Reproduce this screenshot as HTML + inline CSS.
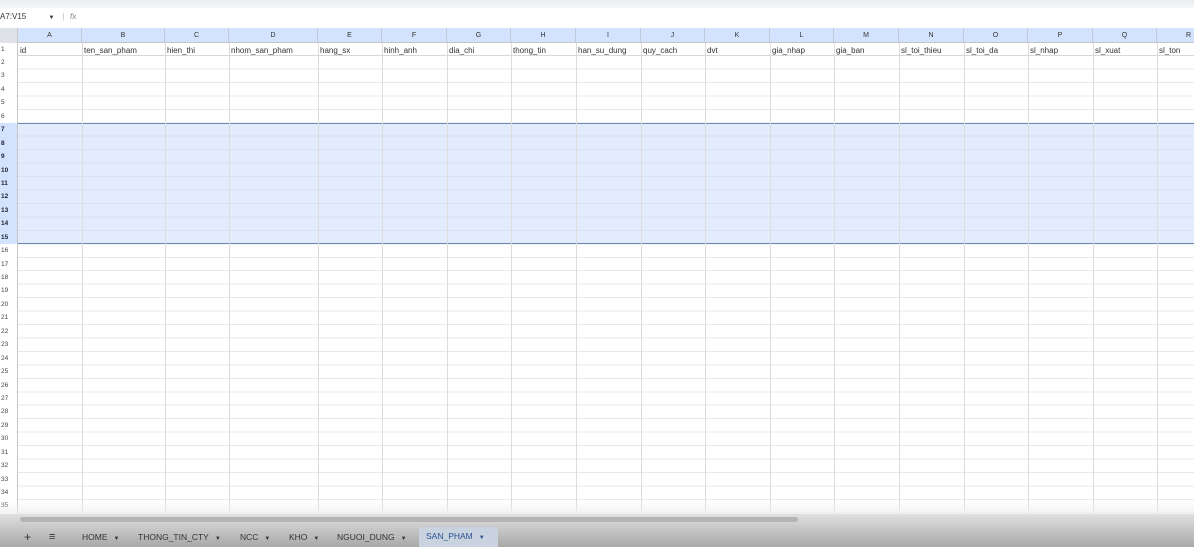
<!DOCTYPE html>
<html><head><meta charset="utf-8"><style>
*{margin:0;padding:0;box-sizing:border-box}
body{width:1194px;height:547px;overflow:hidden;background:#fff;position:relative;font-family:"Liberation Sans",Arial,sans-serif;color:#333}
.abs{position:absolute}
#top{left:0;top:0;width:1194px;height:8px;background:linear-gradient(#e9ecf2,#f6f7f9)}
#nb{left:0;top:12px;font-size:8px;color:#333}
#colhdr{left:0;top:28px;width:1194px;height:15px;background:#d3e3fd;border-bottom:1px solid #c4c7c5}
.ch{position:absolute;top:0;height:15px;line-height:15px;text-align:center;font-size:7px;color:#333;border-right:1px solid #bfc8d6}
#row1{left:18px;top:43px;height:13px;width:1176px;border-bottom:1px solid #d8d8d8}
.c1{position:absolute;top:1px;line-height:13px;font-size:8px;color:#333;padding-left:2px}
#grid{left:18px;top:56px;width:1176px;height:458px;background:repeating-linear-gradient(to bottom,transparent 0,transparent 12.45px,#e9e9e9 12.45px,#e9e9e9 13.45px)}
#sel{left:18px;top:123px;width:1176px;height:121px;background:rgba(200,218,250,.5);border-top:1px solid #6b87b3;border-bottom:1px solid #6b87b3}
.vl{position:absolute;top:43px;width:1px;height:472px;background:#dcdcdc}
#rh{left:0;top:43px;width:18px;height:472px;border-right:1px solid #c4c7c5}
#rh div{height:13.45px;line-height:13.45px;font-size:6.5px;color:#444;padding-left:1px}
#rh div.s{background:#d3e3fd;font-weight:bold;color:#223}
#corner{left:0;top:28px;width:18px;height:15px;background:#dfe3e8;border-right:1px solid #c4c7c5}
#fade{left:0;top:500px;width:1194px;height:15px;background:linear-gradient(rgba(255,255,255,0),rgba(238,238,238,.8))}
#bot{left:0;top:514px;width:1194px;height:33px;background:linear-gradient(#e0e0e0,#cfcfcf 30%,#a8a8a8 100%)}
#sb{left:20px;top:517px;width:778px;height:5px;background:#b4b4b4;border-radius:3px}
.tab{position:absolute;top:528px;height:19px;line-height:19px;font-size:8.5px;color:#333}
.tab b{font-weight:normal;font-size:6px;margin-left:6px}
</style></head><body>
<div id="top" class="abs"></div>
<div id="nb" class="abs">A7:V15 <span style="margin-left:20px;font-size:6px">▼</span> <span style="margin-left:6px;color:#bbb">|</span> <i style="color:#888;margin-left:3px">fx</i></div>

<div id="grid" class="abs"></div>
<div id="sel" class="abs"></div>
<div class="vl" style="left:82px"></div><div class="vl" style="left:165px"></div><div class="vl" style="left:229px"></div><div class="vl" style="left:318px"></div><div class="vl" style="left:382px"></div><div class="vl" style="left:447px"></div><div class="vl" style="left:511px"></div><div class="vl" style="left:576px"></div><div class="vl" style="left:641px"></div><div class="vl" style="left:705px"></div><div class="vl" style="left:770px"></div><div class="vl" style="left:834px"></div><div class="vl" style="left:899px"></div><div class="vl" style="left:964px"></div><div class="vl" style="left:1028px"></div><div class="vl" style="left:1093px"></div><div class="vl" style="left:1157px"></div>

<div id="colhdr" class="abs">
<div class="ch" style="left:18px;width:64px">A</div><div class="ch" style="left:82px;width:83px">B</div><div class="ch" style="left:165px;width:64px">C</div><div class="ch" style="left:229px;width:89px">D</div><div class="ch" style="left:318px;width:64px">E</div><div class="ch" style="left:382px;width:65px">F</div><div class="ch" style="left:447px;width:64px">G</div><div class="ch" style="left:511px;width:65px">H</div><div class="ch" style="left:576px;width:65px">I</div><div class="ch" style="left:641px;width:64px">J</div><div class="ch" style="left:705px;width:65px">K</div><div class="ch" style="left:770px;width:64px">L</div><div class="ch" style="left:834px;width:65px">M</div><div class="ch" style="left:899px;width:65px">N</div><div class="ch" style="left:964px;width:64px">O</div><div class="ch" style="left:1028px;width:65px">P</div><div class="ch" style="left:1093px;width:64px">Q</div><div class="ch" style="left:1157px;width:64px">R</div>
</div>
<div id="corner" class="abs"></div>
<div id="row1" class="abs">
<div class="c1" style="left:0">id</div><div class="c1" style="left:64px">ten_san_pham</div><div class="c1" style="left:147px">hien_thi</div><div class="c1" style="left:211px">nhom_san_pham</div><div class="c1" style="left:300px">hang_sx</div><div class="c1" style="left:364px">hinh_anh</div><div class="c1" style="left:429px">dia_chi</div><div class="c1" style="left:493px">thong_tin</div><div class="c1" style="left:558px">han_su_dung</div><div class="c1" style="left:623px">quy_cach</div><div class="c1" style="left:687px">dvt</div><div class="c1" style="left:752px">gia_nhap</div><div class="c1" style="left:816px">gia_ban</div><div class="c1" style="left:881px">sl_toi_thieu</div><div class="c1" style="left:946px">sl_toi_da</div><div class="c1" style="left:1010px">sl_nhap</div><div class="c1" style="left:1075px">sl_xuat</div><div class="c1" style="left:1139px">sl_ton</div>
</div>
<div id="rh" class="abs">
<div style="height:13px;line-height:13px">1</div><div>2</div><div>3</div><div>4</div><div>5</div><div>6</div><div class="s">7</div><div class="s">8</div><div class="s">9</div><div class="s">10</div><div class="s">11</div><div class="s">12</div><div class="s">13</div><div class="s">14</div><div class="s">15</div><div>16</div><div>17</div><div>18</div><div>19</div><div>20</div><div>21</div><div>22</div><div>23</div><div>24</div><div>25</div><div>26</div><div>27</div><div>28</div><div>29</div><div>30</div><div>31</div><div>32</div><div>33</div><div>34</div><div>35</div>
</div>
<div id="fade" class="abs"></div>
<div id="bot" class="abs"></div>
<div id="sb" class="abs"></div>
<div class="tab" style="left:24px;font-size:12px">+</div>
<div class="tab" style="left:49px;font-size:11px">≡</div>
<div class="tab" style="left:82px">HOME<b>▼</b></div>
<div class="tab" style="left:138px">THONG_TIN_CTY<b>▼</b></div>
<div class="tab" style="left:240px">NCC<b>▼</b></div>
<div class="tab" style="left:289px">KHO<b>▼</b></div>
<div class="tab" style="left:337px">NGUOI_DUNG<b>▼</b></div>
<div class="tab" style="left:419px;width:79px;background:#c9d3e0;color:#2a4f8f;padding-left:7px;top:527px;height:20px">SAN_PHAM<b>▼</b></div>
</body></html>
